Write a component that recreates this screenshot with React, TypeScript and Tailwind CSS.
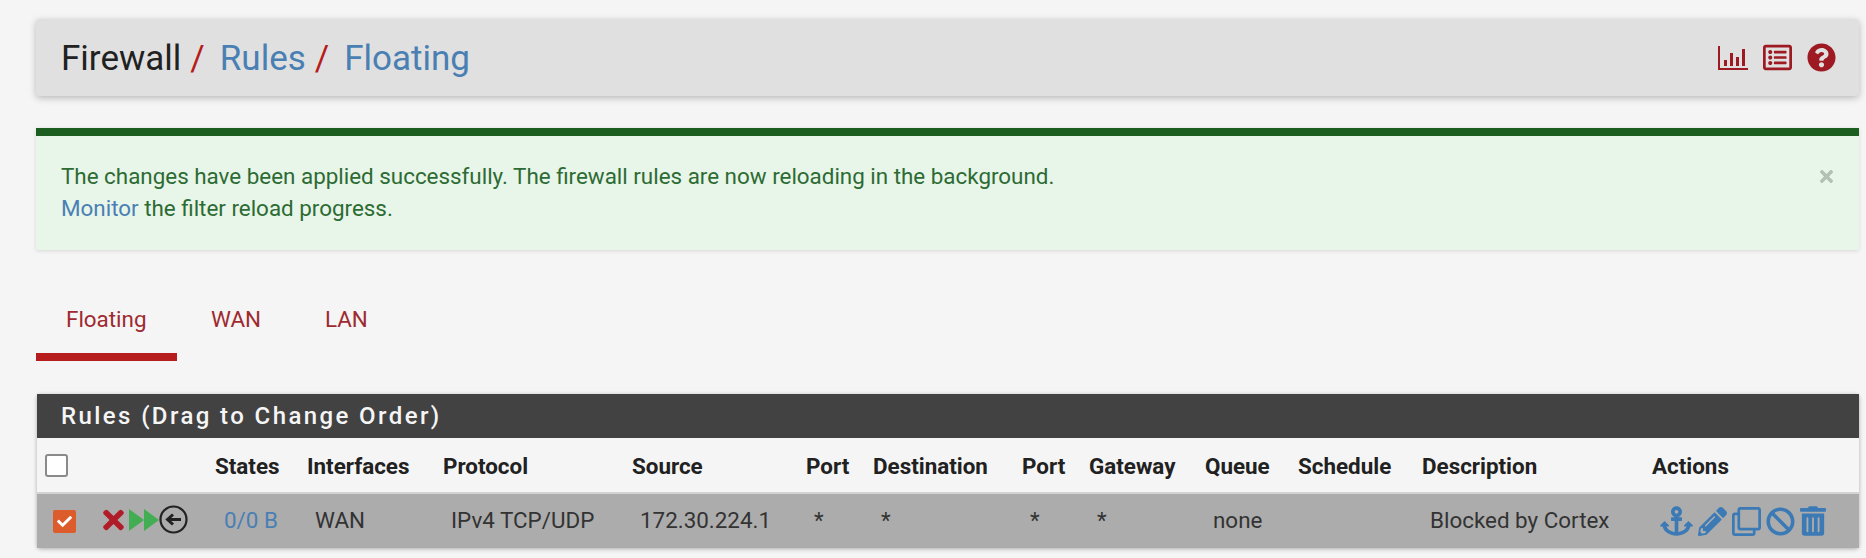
import React from "react";
import { FaAnchor, FaPencilAlt, FaRegClone, FaBan, FaTrashAlt, FaTimes, FaQuestionCircle, FaRegListAlt, FaCheck } from "react-icons/fa";

const widths = [65, 113, 92, 136, 189, 174, 67, 149, 67, 116, 93, 124, 230, 207];
const heads = ["States", "Interfaces", "Protocol", "Source", "Port", "Destination", "Port", "Gateway", "Queue", "Schedule", "Description", "Actions"];
const cells = ["WAN", "IPv4 TCP/UDP", "172.30.224.1", "*", "*", "*", "*", "none", "", "Blocked by Cortex"];

export default function App() {
  return (
    <div className="w-[1866px] h-[558px] overflow-hidden bg-[#f5f5f5] pl-9 pr-[7px] pt-[19px] text-[#212121] [font-family:Roboto,'Liberation_Sans',sans-serif]">
      <header className="h-[77px] flex items-center justify-between pl-[25px] pr-[23px] bg-[#e0e0e0] rounded-sm shadow-[0_2px_7px_rgba(0,0,0,0.25)]">
        <h1 className="text-[35px] leading-none font-normal flex items-baseline pt-[2px]">
          <span>Firewall</span>
          <span className="text-[#b71c1c] ml-[9px] mr-[15px]">/</span>
          <span className="text-[#4a7fb3]">Rules</span>
          <span className="text-[#b71c1c] ml-[9px] mr-[15px]">/</span>
          <span className="text-[#4a7fb3]">Floating</span>
        </h1>
        <div className="flex items-center gap-[15px] text-[#9e1a22]">
          <svg width="30" height="26" viewBox="0 0 30 26" fill="currentColor" aria-hidden="true">
            <path d="M0 1h2v22h28v2H0z" />
            <rect x="6" y="15" width="3" height="6" />
            <rect x="12" y="8" width="3" height="13" />
            <rect x="18" y="12" width="3" height="9" />
            <rect x="24" y="4" width="3" height="17" />
          </svg>
          <FaRegListAlt className="w-[29px] h-[29px]" />
          <FaQuestionCircle className="w-[29px] h-[29px]" />
        </div>
      </header>

      <div className="mt-[32px] h-[122px] bg-[#e8f5e9] border-t-8 border-[#1b5e20] pl-[25px] pr-[24px] pt-[24px] flex justify-between shadow-[0_1px_4px_rgba(0,0,0,0.12)] text-[22.4px] leading-[32px] text-[#2c6b33]">
        <p>
          The changes have been applied successfully. The firewall rules are now reloading in the background.
          <br />
          <span className="text-[#4a7fb3]">Monitor</span> the filter reload progress.
        </p>
        <FaTimes className="w-[19px] h-[19px] mt-[7px] -mr-px text-[#b4bfb5]" />
      </div>

      <nav className="mt-[40px] h-[71px] flex text-[22.4px] text-[#9e2a2f]">
        <div className="w-[141px] pl-[30px] pt-[13px] border-b-8 border-[#b71c1c]">Floating</div>
        <div className="ml-[34px] pt-[13px]">WAN</div>
        <div className="ml-[64px] pt-[13px]">LAN</div>
      </nav>

      <section className="mt-[33px] ml-px rounded-sm shadow-[0_1px_4px_rgba(0,0,0,0.3)]">
        <h2 className="h-[44px] bg-[#424242] text-[#f5f5f5] pl-[24px] text-[24px] leading-[44px] font-medium tracking-[2.4px]">
          Rules (Drag to Change Order)
        </h2>
        <table className="w-full table-fixed border-collapse text-[22.4px]">
          <colgroup>
            {widths.map((w, i) => (
              <col key={i} style={{ width: w }} />
            ))}
          </colgroup>
          <thead>
            <tr className="h-[55px] bg-[#f5f5f5] border-b-2 border-[#d4d4d4]">
              <th className="text-left p-0 pl-2">
                <span className="block w-[23px] h-[23px] rounded-[3px] border-2 border-[#8a8a8a] bg-white" />
              </th>
              <th className="p-0" />
              {heads.map((h, i) => (
                <th key={i} className="text-left p-0 pt-[4px] font-bold text-[#212121] whitespace-nowrap">{h}</th>
              ))}
            </tr>
          </thead>
          <tbody>
            <tr className="h-[55px] bg-[#acacac] text-[#333]">
              <td className="p-0 pl-[16px]">
                <span className="flex items-center justify-center w-[23px] h-[23px] rounded-[2px] bg-[#dc5c2c] text-white">
                  <FaCheck className="w-[15px] h-[15px]" />
                </span>
              </td>
              <td className="p-0">
                <div className="flex items-center -mt-[3px]">
                  <FaTimes className="w-[25px] h-[30px] text-[#b01c28] -ml-px" />
                  <svg width="30" height="24" viewBox="0 0 30 24" fill="#43ad54" className="ml-[3px]" aria-hidden="true">
                    <path d="M0 1l15 11L0 23z" />
                    <path d="M15 1l15 11-15 11z" />
                  </svg>
                  <svg width="29" height="29" viewBox="0 0 29 29" fill="none" stroke="#222" aria-hidden="true">
                    <circle cx="14.5" cy="14.5" r="13" strokeWidth="2.2" />
                    <path d="M22 14.5H9M14 9.5l-5.5 5 5.5 5" strokeWidth="3" />
                  </svg>
                </div>
              </td>
              <td className="p-0 pl-[9px] text-[#4a7fb3]">0/0 B</td>
              {cells.map((c, i) => (
                <td key={i} className="p-0 pl-[8px] whitespace-nowrap">{c}</td>
              ))}
              <td className="p-0 pl-[8px]">
                <div className="flex items-center gap-[5px] text-[#3b7ab5]">
                  <FaAnchor className="w-[33px] h-[30px]" />
                  <FaPencilAlt className="w-[29px] h-[29px]" />
                  <FaRegClone className="w-[29px] h-[29px]" />
                  <FaBan className="w-[29px] h-[29px]" />
                  <FaTrashAlt className="w-[26px] h-[30px]" />
                </div>
              </td>
            </tr>
          </tbody>
        </table>
      </section>
    </div>
  );
}
